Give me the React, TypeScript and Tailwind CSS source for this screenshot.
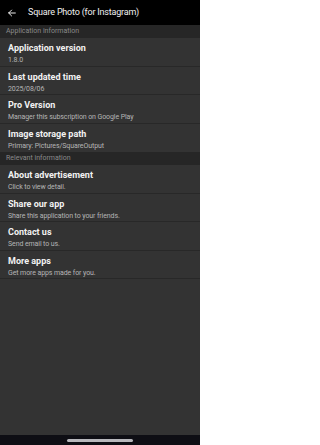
import React from "react";

function Item({ title, sub, last }: { title: string; sub: string; last?: boolean }) {
  return (
    <div className={"flex flex-col px-2 pt-[5px] h-[28.5px] " + (last ? "" : "border-b border-[#282828]")}>
      <div className="text-[9px] leading-[11px] font-bold text-[#f2f2f2]">{title}</div>
      <div className="text-[7px] leading-[10px] tracking-[-0.1px] text-[#b5b5b5] mt-[1px]">{sub}</div>
    </div>
  );
}

function Section({ label }: { label: string }) {
  return (
    <div className="h-[13px] bg-[#262626] flex items-center px-[6px] text-[7px] text-[#8a8a8a]">{label}</div>
  );
}

export default function App() {
  return (
    <div className="w-[200px] h-[445px] bg-[#333333] flex flex-col overflow-hidden" style={{ fontFamily: "Roboto, 'Liberation Sans', sans-serif" }}>
      <div className="h-[25px] bg-black flex items-center shrink-0">
        <svg width="10" height="10" viewBox="0 0 24 24" className="ml-[7px]" fill="none" stroke="#ffffff" strokeWidth="2.2" strokeLinecap="round" strokeLinejoin="round">
          <path d="M20 12H4" />
          <path d="M11 5l-7 7 7 7" />
        </svg>
        <div className="ml-[11px] text-[9px] tracking-[-0.2px] text-[#f0f0f0] mt-[1px]">Square Photo (for Instagram)</div>
      </div>
      <Section label="Application information" />
      <Item title="Application version" sub="1.8.0" />
      <Item title="Last updated time" sub="2025/08/06" />
      <Item title="Pro Version" sub="Manager this subscription on Google Play" />
      <Item title="Image storage path" sub="Primary: Pictures/SquareOutput" last />
      <Section label="Relevant information" />
      <Item title="About advertisement" sub="Click to view detail." />
      <Item title="Share our app" sub="Share this application to your friends." />
      <Item title="Contact us" sub="Send email to us." />
      <Item title="More apps" sub="Get more apps made for you." />
      <div className="flex-1" />
      <div className="h-[10px] bg-[#0e0e14] flex items-center justify-center shrink-0">
        <div className="w-[66px] h-[3px] rounded-full bg-[#b8b8bc]" />
      </div>
    </div>
  );
}
